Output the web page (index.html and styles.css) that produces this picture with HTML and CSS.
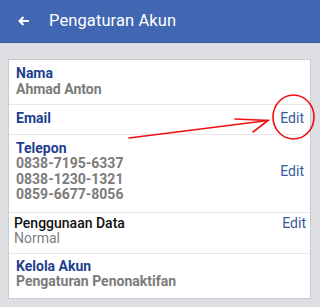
FILE: index.html
```html
<!DOCTYPE html>
<html>
<head>
<meta charset="utf-8">
<link rel="stylesheet" href="styles.css">
</head>
<body>
<header class="topbar">
  <svg class="back" width="12" height="10" viewBox="0 0 12 10"><path d="M5.5 1 L1.5 5 L5.5 9 M1.5 5 H11" stroke="#fff" stroke-width="2" fill="none"/></svg>
  <span class="title">Pengaturan Akun</span>
</header>
<main class="page">
  <section class="card">
    <div class="row r-nama">
      <div class="info">
        <div class="label">Nama</div>
        <div class="value">Ahmad Anton</div>
      </div>
    </div>
    <div class="row r-email">
      <div class="info"><div class="label">Email</div></div>
      <a class="edit">Edit</a>
    </div>
    <div class="row r-tel">
      <div class="info">
        <div class="label">Telepon</div>
        <div class="value">0838-7195-6337</div>
        <div class="value">0838-1230-1321</div>
        <div class="value">0859-6677-8056</div>
      </div>
      <a class="edit">Edit</a>
    </div>
    <div class="row r-data">
      <div class="info">
        <div class="label dark">Penggunaan Data</div>
        <div class="value light">Normal</div>
      </div>
      <a class="edit top">Edit</a>
    </div>
    <div class="row r-kelola">
      <div class="info">
        <div class="label">Kelola Akun</div>
        <div class="value">Pengaturan Penonaktifan</div>
      </div>
    </div>
  </section>
</main>
<svg class="annot" width="320" height="307" viewBox="0 0 320 307">
  <g stroke="#f01010" stroke-width="1.6" fill="none" stroke-linecap="round">
    <path d="M129 138 L268 120.5"/>
    <path d="M235 119 L268 120.5 L253 132"/>
    <ellipse cx="293.5" cy="117" rx="20.5" ry="22"/>
  </g>
</svg>
</body>
</html>
```

FILE: styles.css
```css
* { box-sizing: border-box; }
html, body { margin: 0; padding: 0; }
body {
  width: 320px;
  height: 307px;
  background: #dddfe2;
  font-family: Roboto, "Noto Sans", sans-serif;
  position: relative;
  overflow: hidden;
}
.topbar {
  height: 43px;
  background: #4267b2;
  border-bottom: 1px solid #3a5a9c;
  display: flex;
  align-items: center;
  padding-left: 18px;
  padding-bottom: 1px;
}
.back { display: block; margin-right: 19px; }
.title {
  color: #fff;
  font-size: 16.5px;
  letter-spacing: 0.1px;
}
.page { padding: 16px 9px 0 8px; }
.card {
  background: #fff;
  border: 1px solid #c9cbd0;
}
.row {
  display: flex;
  align-items: center;
  justify-content: space-between;
  border-bottom: 1px solid #e6e7ea;
  padding: 6px 6px 7px 7px;
  font-size: 14px;
  line-height: 15.5px;
}
.row:last-child { border-bottom: none; }
.r-tel { padding-bottom: 9px; }
.r-data { align-items: flex-start; padding: 3px 4px 6px 5px; }
.r-kelola { padding-top: 5px; padding-bottom: 8px; }
.label { color: #1d3f8f; font-weight: 700; }
.label.dark { color: #111; font-weight: 500; }
.value { color: #7b7b7b; font-weight: 700; }
.value.light { font-weight: 400; color: #7f7f7f; }
.edit { color: #3b5998; font-size: 14px; }
.annot { position: absolute; left: 0; top: 0; pointer-events: none; }
```
